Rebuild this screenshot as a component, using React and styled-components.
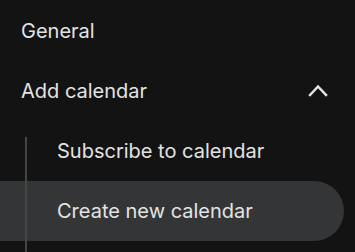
import React from "react";
import styled, { createGlobalStyle } from "styled-components";

const GlobalStyle = createGlobalStyle`
  html, body {
    margin: 0;
    padding: 0;
    background: #131314;
  }
  body {
    font-family: Inter, Roboto, "Noto Sans", sans-serif;
  }
`;

const Nav = styled.nav`
  width: 355px;
  height: 252px;
  overflow: hidden;
  background: #131314;
  display: flex;
  flex-direction: column;
  padding-top: 1px;
  box-sizing: border-box;
`;

const Row = styled.div`
  height: 60px;
  display: flex;
  align-items: center;
  justify-content: space-between;
  padding-left: ${(p) => (p.$sub ? "57px" : "21px")};
  padding-right: 25px;
  margin-right: ${(p) => (p.$active ? "11px" : "0")};
  border-radius: 0 30px 30px 0;
  background: ${(p) => (p.$active ? "#333537" : "transparent")};
  color: #e3e3e3;
  font-size: 20px;
  line-height: 60px;
  flex-shrink: 0;
`;

const SubList = styled.div`
  position: relative;
  display: flex;
  flex-direction: column;

  &::after {
    content: "";
    position: absolute;
    left: 25px;
    top: 16px;
    bottom: -40px;
    width: 2px;
    background: #444746;
  }
`;

const Chevron = () => (
  <svg width="24" height="24" viewBox="0 0 24 24" fill="none">
    <polyline
      points="4,16 12,7.5 20,16"
      stroke="#e3e3e3"
      strokeWidth="2.5"
      strokeLinecap="square"
    />
  </svg>
);

export default function App() {
  return (
    <>
      <GlobalStyle />
      <Nav>
        <Row>General</Row>
        <Row>
          Add calendar
          <Chevron />
        </Row>
        <SubList>
          <Row $sub>Subscribe to calendar</Row>
          <Row $sub $active>Create new calendar</Row>
        </SubList>
      </Nav>
    </>
  );
}
